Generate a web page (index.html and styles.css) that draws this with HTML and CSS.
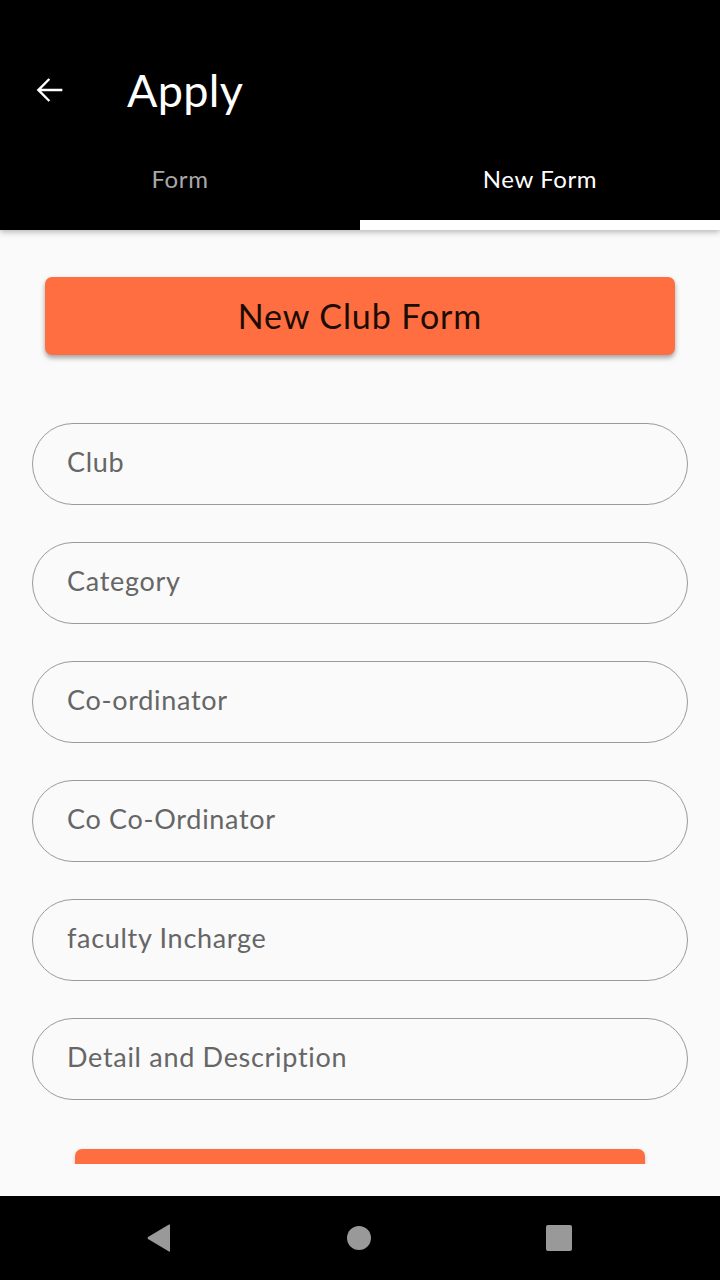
FILE: index.html
```html
<!DOCTYPE html>
<html>
<head>
<meta charset="utf-8">
<link rel="stylesheet" href="styles.css">
</head>
<body>
<div class="screen">
  <header class="appbar">
    <div class="toolbar">
      <svg class="back" viewBox="0 0 24 24"><path d="M20 11.2H7.4l5.3-5.3-1-1L4.6 12l7.1 7.1 1-1-5.3-5.3H20z" fill="#fff"/></svg>
      <h1 class="title">Apply</h1>
    </div>
    <nav class="tabs">
      <div class="tab">Form</div>
      <div class="tab active">New Form</div>
    </nav>
  </header>
  <main class="content">
    <div class="scroll">
      <button class="primary">New Club Form</button>
      <div class="fields">
        <div class="field">Club</div>
        <div class="field">Category</div>
        <div class="field">Co-ordinator</div>
        <div class="field">Co Co-Ordinator</div>
        <div class="field">faculty Incharge</div>
        <div class="field">Detail and Description</div>
      </div>
      <div class="submit"></div>
    </div>
  </main>
  <footer class="navbar">
    <svg width="26" height="30" viewBox="0 0 26 30"><path d="M24 2 L24 28 Q24 29 23 28.4 L2 16 Q1 15 2 14 L23 1.6 Q24 1 24 2 Z" fill="#999"/></svg>
    <svg width="26" height="26" viewBox="0 0 26 26"><ellipse cx="13" cy="13" rx="12" ry="12" fill="#999"/></svg>
    <svg width="28" height="28" viewBox="0 0 28 28"><rect x="1" y="1" width="26" height="26" rx="2" fill="#999"/></svg>
  </footer>
</div>
</body>
</html>
```
FILE: styles.css
```css
* { box-sizing: border-box; }
html, body { margin: 0; padding: 0; }
body { font-family: Lato, "Open Sans", sans-serif; background: #000; }
.screen { width: 720px; height: 1280px; display: flex; flex-direction: column; background: #fafafa; overflow: hidden; }
.appbar { background: #000; height: 230px; flex: none; box-shadow: 0 2px 6px rgba(0,0,0,0.28); position: relative; z-index: 1; }
.toolbar { height: 140px; display: flex; align-items: center; padding: 40px 0 0 29px; }
.back { width: 40px; height: 40px; }
.title { margin: 0 0 0 58px; color: #fff; font-weight: 400; font-size: 45px; letter-spacing: 0.3px; }
.tabs { display: flex; height: 90px; }
.tab { flex: 1; display: flex; align-items: center; justify-content: center; font-size: 24px; letter-spacing: 0.6px; color: #a8a8a8; border-bottom: 10px solid transparent; padding-bottom: 4px; }
.tab.active { color: #fff; border-bottom-color: #fff; }
.content { flex: 1; display: flex; flex-direction: column; background: #fafafa; }
.scroll { height: 934px; overflow: hidden; display: flex; flex-direction: column; align-items: center; padding-top: 47px; }
.primary { width: 630px; height: 78px; border: none; border-radius: 7px; background: #ff6e40; color: #1c0c04; font-family: inherit; font-size: 34px; letter-spacing: 0.9px; box-shadow: 0 3px 5px rgba(0,0,0,0.35); flex: none; padding: 0 0 2px; }
.fields { display: flex; flex-direction: column; gap: 37px; margin-top: 68px; width: 656px; }
.field { height: 82px; border: 1.5px solid #9a9a9a; border-radius: 41px; display: flex; align-items: center; padding-left: 34px; font-size: 27px; letter-spacing: 0.7px; color: #666; padding-bottom: 5px; }
.submit { width: 570px; height: 60px; border-radius: 7px; background: #ff6e40; margin-top: 49px; flex: none; box-shadow: 0 2px 4px rgba(0,0,0,0.2); }
.navbar { height: 84px; flex: none; background: #000; display: flex; align-items: center; justify-content: space-between; padding: 0 147px 0 146px; }
```
